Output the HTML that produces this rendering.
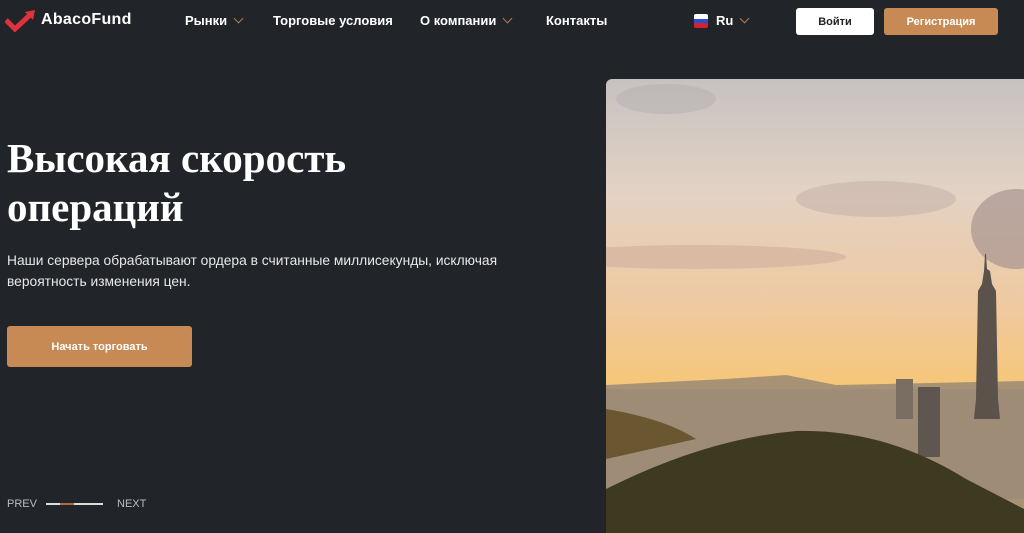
<!DOCTYPE html>
<html><head><meta charset="utf-8"><style>
*{margin:0;padding:0;box-sizing:border-box}
body{width:1024px;height:533px;overflow:hidden;background:#212429;font-family:"Liberation Sans",sans-serif;color:#fff;position:relative}
.nav a{position:absolute;top:13px;font-size:13px;font-weight:bold;color:#fff;white-space:nowrap}
.chev{display:inline-block;width:7px;height:7px;border-right:1.5px solid #b07a4c;border-bottom:1.5px solid #b07a4c;transform:rotate(45deg);margin-left:8px;position:relative;top:-3px}
.btn{position:absolute;border-radius:3px;font-size:11px;font-weight:bold;display:flex;align-items:center;justify-content:center}
</style></head><body>
<svg style="position:absolute;left:5px;top:10px" width="32" height="22" viewBox="0 0 32 22"><path d="M1 10 L10 19 L26 4" stroke="#e0323c" stroke-width="5" fill="none"/><path d="M20 2 L30 0 L28 10 Z" fill="#e0323c"/></svg>
<div style="position:absolute;left:41px;top:11px;font-size:16px;font-weight:bold;letter-spacing:.3px">AbacoFund</div>
<div class="nav">
<a style="left:185px">Рынки<span class="chev"></span></a>
<a style="left:273px">Торговые условия</a>
<a style="left:420px">О компании<span class="chev"></span></a>
<a style="left:546px">Контакты</a>
<a style="left:716px">Ru<span class="chev"></span></a>
</div>
<div style="position:absolute;left:694px;top:14px;width:14px;height:14px;border-radius:2px;overflow:hidden"><div style="height:5px;background:#fff"></div><div style="height:4px;background:#2a4fd0"></div><div style="height:5px;background:#d3222e"></div></div>
<div class="btn" style="left:796px;top:8px;width:78px;height:27px;background:#fff;color:#222">Войти</div>
<div class="btn" style="left:884px;top:8px;width:114px;height:27px;background:#c88a55;color:#fff">Регистрация</div>
<div style="position:absolute;left:7px;top:134px;font-family:'Liberation Serif',serif;font-weight:bold;font-size:41px;line-height:49px">Высокая скорость<br>операций</div>
<div style="position:absolute;left:7px;top:250px;font-size:13.8px;line-height:21px;color:#e8e8e8">Наши сервера обрабатывают ордера в считанные миллисекунды, исключая<br>вероятность изменения цен.</div>
<div class="btn" style="left:7px;top:326px;width:185px;height:41px;background:#c88a55;color:#fff">Начать торговать</div>
<div style="position:absolute;left:7px;top:498px;font-size:11px;color:#bbb">PREV</div>
<div style="position:absolute;left:46px;top:503px;width:57px;height:2px;background:#ddd"><div style="margin-left:14px;width:14px;height:2px;background:#b06a3c"></div></div>
<div style="position:absolute;left:117px;top:498px;font-size:11px;color:#bbb">NEXT</div>
<svg style="position:absolute;left:606px;top:79px;border-top-left-radius:6px" width="418" height="454" viewBox="0 0 418 454">
<defs><linearGradient id="s" x1="0" y1="0" x2="0" y2="1">
<stop offset="0" stop-color="#c6c2c0"/><stop offset=".25" stop-color="#e3d2c4"/><stop offset=".5" stop-color="#efc9a0"/><stop offset=".68" stop-color="#f6c777"/><stop offset=".8" stop-color="#f2b95a"/></linearGradient></defs>
<rect width="418" height="454" fill="url(#s)"/>
<ellipse cx="90" cy="178" rx="150" ry="12" fill="#c9a898" opacity=".5"/>
<ellipse cx="270" cy="120" rx="80" ry="18" fill="#c2aea6" opacity=".5"/>
<ellipse cx="410" cy="150" rx="45" ry="40" fill="#9c8b88" opacity=".6"/>
<ellipse cx="60" cy="20" rx="50" ry="15" fill="#aeaaac" opacity=".4"/>
<path d="M0 306 L120 300 L180 296 L230 306 L418 302 L418 454 L0 454Z" fill="#a79276"/>
<path d="M0 310 L418 310 L418 420 L0 420Z" fill="#9a8a78" opacity=".7"/>
<rect x="290" y="300" width="17" height="40" fill="#7a6e62"/><rect x="312" y="308" width="22" height="70" fill="#5e564f"/>
<path d="M379 175 L380 175 L381 190 L384 192 L386 205 L390 212 L392 320 L394 340 L368 340 L370 320 L372 212 L376 205 L378 192Z" fill="#5b524c"/>
<path d="M0 330 Q60 340 90 360 L0 380Z" fill="#6b5632"/>
<path d="M0 454 L0 410 Q100 360 190 352 Q280 350 360 400 L418 430 L418 454Z" fill="#3e3a22"/>
</svg>
</body></html>
